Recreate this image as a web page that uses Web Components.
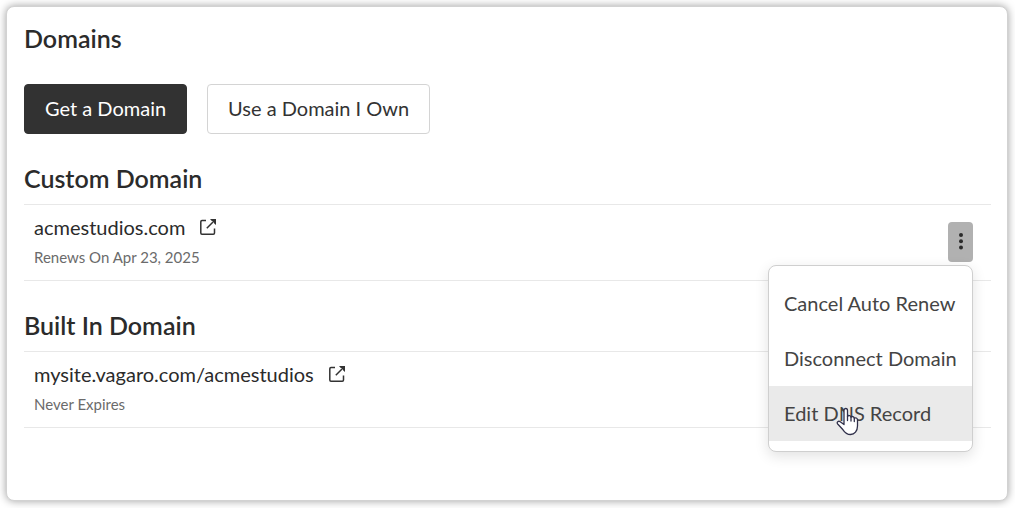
<!DOCTYPE html>
<html lang="en">
<head>
<meta charset="utf-8">
<meta name="viewport" content="width=device-width, initial-scale=1">
<title>Domains</title>
<style>
  body { margin: 0; background: #fff; color: #2b2b2b; font-family: Lato, "Open Sans", sans-serif; font-size: 20px; line-height: 24px; }
</style>
</head>
<body>
<domain-settings></domain-settings>

<script>
const define = (name, html) => {
  const template = document.createElement('template');
  template.innerHTML = html;
  customElements.define(name, class extends HTMLElement {
    constructor() {
      super();
      this.attachShadow({ mode: 'open' }).append(template.content.cloneNode(true));
    }
  });
};

define('action-button', `
  <style>
    :host { display: block; }
    button { display: block; height: 50px; padding: 0 20px 2px; font: inherit; color: #333; background: #fff; border: 1px solid #d4d4d4; border-radius: 4px; cursor: pointer; }
    :host([primary]) button { color: #fff; background: #323232; border-color: #323232; }
  </style>
  <button type="button"><slot></slot></button>`);

define('external-icon', `
  <style>:host { display: block; width: 18px; height: 18px; } svg { display: block; }</style>
  <svg width="18" height="18" viewBox="0 0 18 18" fill="none" stroke="#333" stroke-width="1.5" aria-hidden="true">
    <path d="M7 2.500H3Q1.800 2.500 1.800 3.700V15Q1.800 16.200 3 16.200H14.300Q15.500 16.200 15.500 15V10.500"/>
    <path d="M7.800 10.200 15.500 2.500"/>
    <path d="M11 1H17V7L15 5.200V3H12.800Z" fill="#333" stroke="none"/>
  </svg>`);

define('domain-section', `
  <style>
    :host { display: block; }
    h2 { margin: 0 0 12px; font-size: 25px; line-height: 28px; font-weight: 600; }
    .row { display: flex; align-items: flex-start; justify-content: space-between; padding: 10px 18px 13px 10px; border: solid #e8e8e8; border-width: 1px 0; }
    .note { margin: 8px 0 0; font-size: 15px; line-height: 20px; color: #6b6b6b; }
  </style>
  <h2><slot name="title"></slot></h2>
  <div class="row">
    <div>
      <slot name="link"></slot>
      <p class="note"><slot name="note"></slot></p>
    </div>
    <slot name="menu"></slot>
  </div>`);

define('domain-link', `
  <style>
    :host { display: block; }
    a { display: flex; align-items: center; gap: 14px; color: #2b2b2b; text-decoration: none; }
  </style>
  <a href="#"><slot></slot><external-icon></external-icon></a>`);

define('hand-pointer', `
  <style>:host { display: block; width: 24px; height: 30px; pointer-events: none; } svg { display: block; }</style>
  <svg width="24" height="30" viewBox="0 0 24 30" fill="#fff" stroke="#30304a" stroke-width="1.300" stroke-linejoin="round" stroke-linecap="round" aria-hidden="true">
    <path d="M8 17.500V3.500C8 .8 11.500.8 11.500 3.500V9.500C12.500 8 14.800 8.500 15 10.200C16.200 8.900 18 9.500 18.300 11.200C19.500 10.300 21.500 11 21.500 13V19C21.500 24 18.500 27.500 14.500 27.500C10.500 27.500 8.800 25.500 7 22.800L1.700 17C.3 15.200 2.400 13.500 4.200 14.700Z"/>
    <path d="M11.500 9.500V13.500M15 10.200V14M18.300 11.200V14.500" fill="none"/>
  </svg>`);

define('menu-item', `
  <style>
    :host { display: block; position: relative; }
    button { display: block; width: 100%; height: 55px; padding: 0 15px 2px; border: 0; background: transparent; font: inherit; color: #444; text-align: left; white-space: nowrap; cursor: pointer; }
    :host([active]) button { background: #eaeaea; }
    ::slotted(hand-pointer) { position: absolute; left: 67px; top: 21px; }
  </style>
  <button type="button" role="menuitem"><slot></slot></button>
  <slot name="pointer"></slot>`);

define('row-menu', `
  <style>
    :host { display: block; position: relative; margin-top: 7px; }
    .trigger { display: flex; align-items: center; justify-content: center; width: 25px; height: 40px; padding: 0; border: 0; border-radius: 4px; background: #b1b1b1; cursor: pointer; }
    .list { position: absolute; z-index: 1; top: calc(100% + 3px); right: 0; width: 203px; padding: 10px 0; background: #fff; border: 1px solid #cfcfcf; border-radius: 8px; box-shadow: 0 4px 14px rgba(0,0,0,.12); }
  </style>
  <button class="trigger" type="button" aria-label="Domain options" aria-haspopup="menu" aria-expanded="true">
    <svg width="6" height="18" viewBox="0 0 6 18" fill="#2b2b2b" aria-hidden="true"><circle cx="3" cy="2" r="2"/><circle cx="3" cy="8.300" r="2"/><circle cx="3" cy="14.600" r="2"/></svg>
  </button>
  <div class="list" role="menu"><slot></slot></div>`);

define('domain-settings', `
  <style>
    :host { box-sizing: border-box; min-height: 100vh; padding: 6px 7px 7px 6px; display: flex; }
    main { flex: 1; min-width: 0; box-sizing: border-box; padding: 17px 16px 30px 17px; background: #fff; border: 1px solid #d2d2d2; border-radius: 8px; box-shadow: 0 0 8px rgba(0,0,0,.38); display: flex; flex-direction: column; gap: 30px; }
    h1 { margin: 0 0 2px; font-size: 25px; line-height: 28px; font-weight: 600; }
    .actions { display: flex; flex-wrap: wrap; gap: 20px; }
  </style>
  <main>
    <h1>Domains</h1>
    <div class="actions">
      <action-button primary>Get a Domain</action-button>
      <action-button>Use a Domain I Own</action-button>
    </div>
    <domain-section>
      <span slot="title">Custom Domain</span>
      <domain-link slot="link">acmestudios.com</domain-link>
      <span slot="note">Renews On Apr 23, 2025</span>
      <row-menu slot="menu">
        <menu-item>Cancel Auto Renew</menu-item>
        <menu-item>Disconnect Domain</menu-item>
        <menu-item active>Edit DNS Record<hand-pointer slot="pointer"></hand-pointer></menu-item>
      </row-menu>
    </domain-section>
    <domain-section>
      <span slot="title">Built In Domain</span>
      <domain-link slot="link">mysite.vagaro.com/acmestudios</domain-link>
      <span slot="note">Never Expires</span>
    </domain-section>
  </main>`);
</script>
</body>
</html>
